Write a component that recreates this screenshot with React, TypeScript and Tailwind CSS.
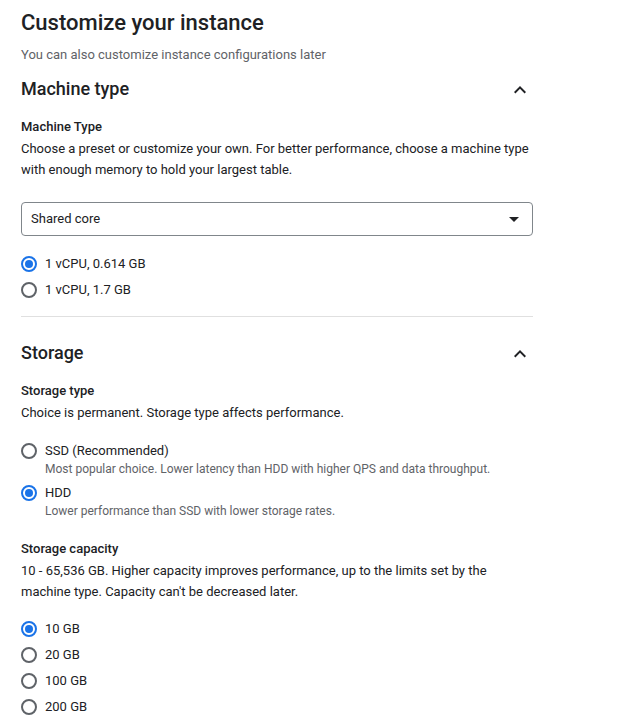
import React from "react";

function Chevron() {
  return (
    <svg width="24" height="24" viewBox="0 0 24 24" className="text-[#202124]">
      <path d="M7.41 15.41 12 10.83l4.59 4.58L18 14l-6-6-6 6z" fill="currentColor" />
    </svg>
  );
}

function Radio({ checked }: { checked?: boolean }) {
  return checked ? (
    <span className="flex h-4 w-4 shrink-0 items-center justify-center rounded-full border-2 border-[#1a73e8]">
      <span className="h-2 w-2 rounded-full bg-[#1a73e8]" />
    </span>
  ) : (
    <span className="h-4 w-4 shrink-0 rounded-full border-2 border-[#5f6368]" />
  );
}

function RadioRow({ label, checked }: { label: string; checked?: boolean }) {
  return (
    <div className="flex h-[26px] items-center gap-2 text-[13px] text-[#202124]">
      <Radio checked={checked} />
      <span>{label}</span>
    </div>
  );
}

function RadioDesc({ label, desc, checked }: { label: string; desc: string; checked?: boolean }) {
  return (
    <div className="flex flex-col">
      <div className="flex h-[20px] items-center gap-2 text-[13px] text-[#202124]">
        <Radio checked={checked} />
        <span>{label}</span>
      </div>
      <div className="pl-6 text-[12px] leading-[16px] text-[#5f6368]">{desc}</div>
    </div>
  );
}

export default function App() {
  return (
    <div
      className="min-h-screen bg-white pl-[21px] pt-[9px] text-[#202124]"
      style={{ fontFamily: "Roboto, 'Liberation Sans', sans-serif" }}
    >
      <div className="w-[512px]">
        <h1 className="text-[22px] font-medium leading-[28px] text-[#202124]">Customize your instance</h1>
        <p className="mt-[8px] text-[13px] leading-[20px] text-[#5f6368]">
          You can also customize instance configurations later
        </p>

        <div className="mt-[12px] flex h-[24px] items-center justify-between">
          <h2 className="text-[18px] font-medium leading-[24px]">Machine type</h2>
          <span className="mr-[1px] mt-[2px]"><Chevron /></span>
        </div>

        <div className="mt-[16px] text-[13px] font-medium leading-[20px]">Machine Type</div>
        <p className="mt-[1px] text-[13px] leading-[21px]">
          Choose a preset or customize your own. For better performance, choose a machine type with enough memory to
          hold your largest table.
        </p>

        <div className="mt-[22px] flex h-[34px] items-center justify-between rounded border border-[#80868b] pl-[9px] pr-[13px] text-[13px]">
          <span>Shared core</span>
          <svg width="10" height="5" viewBox="0 0 10 5">
            <path d="M0 0l5 5 5-5z" fill="#202124" />
          </svg>
        </div>

        <div className="mt-[15px] flex flex-col">
          <RadioRow label="1 vCPU, 0.614 GB" checked />
          <RadioRow label="1 vCPU, 1.7 GB" />
        </div>

        <div className="mt-[13px] h-px bg-[#e0e0e0]" />

        <div className="mt-[24px] flex h-[24px] items-center justify-between">
          <h2 className="text-[18px] font-medium leading-[24px]">Storage</h2>
          <span className="mr-[1px] mt-[2px]"><Chevron /></span>
        </div>

        <div className="mt-[16px] text-[13px] font-medium leading-[20px]">Storage type</div>
        <p className="mt-[2px] text-[13px] leading-[20px]">Choice is permanent. Storage type affects performance.</p>

        <div className="mt-[18px] flex flex-col gap-[6px]">
          <RadioDesc
            label="SSD (Recommended)"
            desc="Most popular choice. Lower latency than HDD with higher QPS and data throughput."
          />
          <RadioDesc label="HDD" desc="Lower performance than SSD with lower storage rates." checked />
        </div>

        <div className="mt-[20px] text-[13px] font-medium leading-[20px]">Storage capacity</div>
        <p className="mt-[1px] text-[13px] leading-[21px]">
          10 - 65,536 GB. Higher capacity improves performance, up to the limits set by the machine type. Capacity
          can't be decreased later.
        </p>

        <div className="mt-[14px] flex flex-col">
          <RadioRow label="10 GB" checked />
          <RadioRow label="20 GB" />
          <RadioRow label="100 GB" />
          <RadioRow label="200 GB" />
        </div>
      </div>
    </div>
  );
}
